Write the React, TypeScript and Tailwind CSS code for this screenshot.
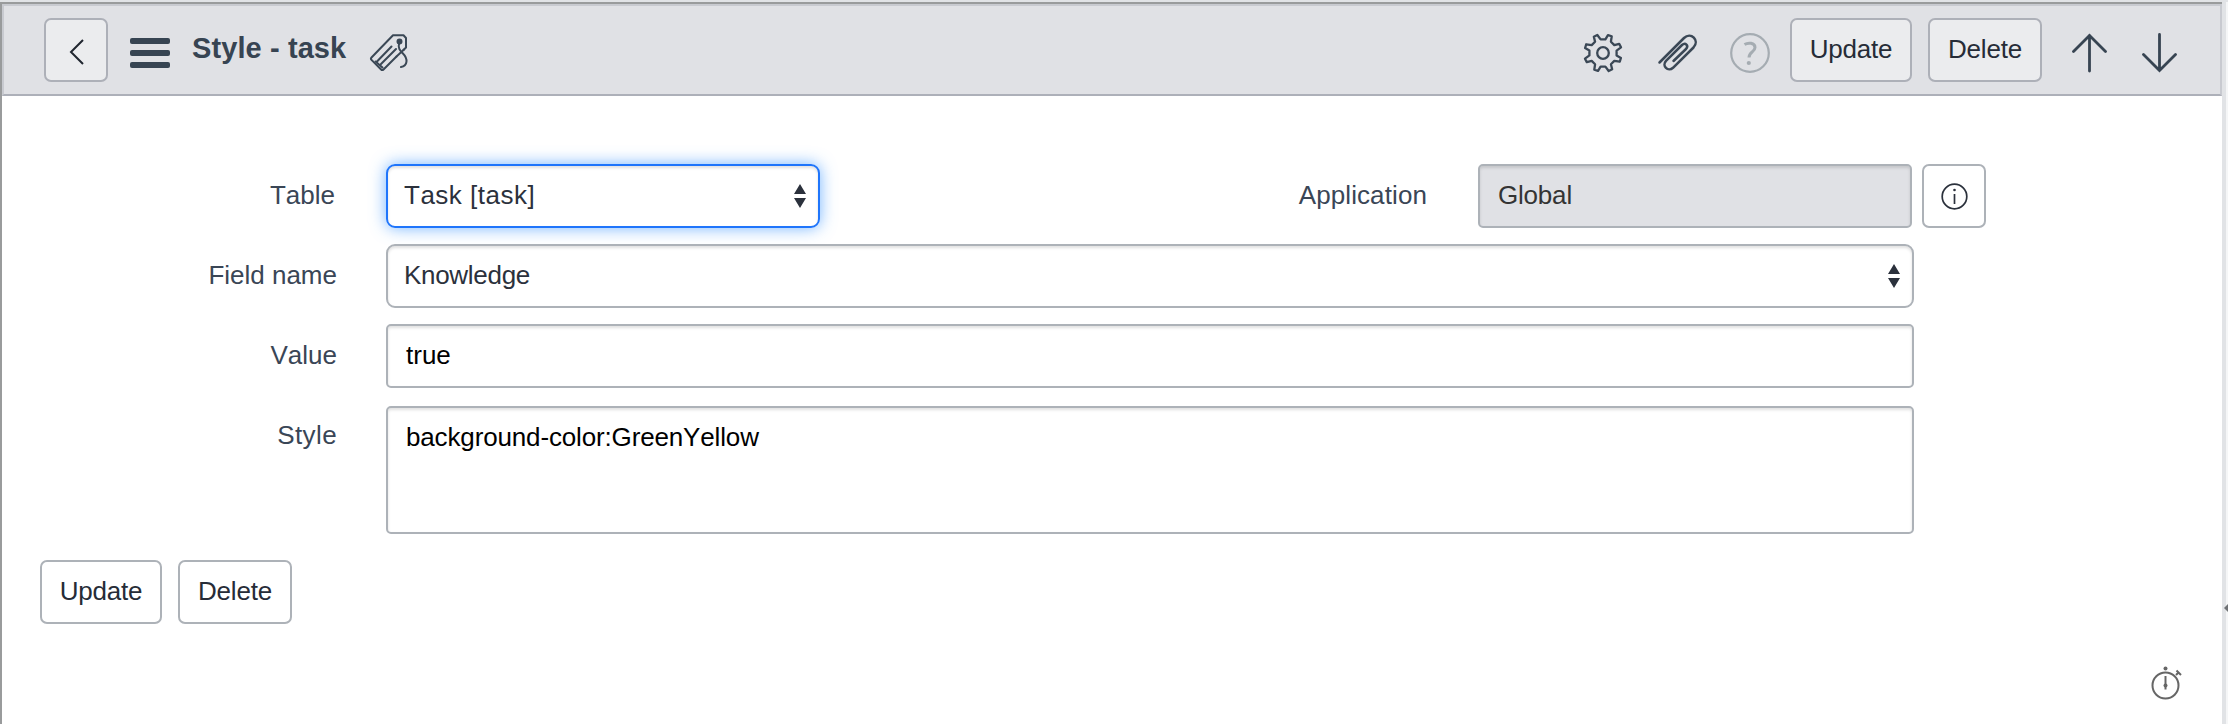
import React from "react";

const btn =
  "flex h-16 shrink-0 justify-center rounded-[7px] border-2 text-[26px] leading-[30px] pt-[14px]";

function polar(radius: number, degrees: number) {
  const a = (degrees * Math.PI) / 180;
  return `${(20 + radius * Math.sin(a)).toFixed(2)} ${(20 - radius * Math.cos(a)).toFixed(2)}`;
}

const gearPath =
  "M" +
  Array.from({ length: 8 }, (_, i) => {
    const a = i * 45;
    return [
      polar(13.8, a - 10),
      polar(13.8, a + 10),
      polar(18.6, a + 15.5),
      polar(18.9, a + 27.5),
    ].join("L");
  }).join("L") +
  "Z";

function Sort() {
  return (
    <svg className="ml-auto mt-[4px] h-6 w-3 shrink-0" viewBox="0 0 12 24" fill="#2b313c">
      <path d="M6 0 12 10H0zM6 24 0 14h12z" />
    </svg>
  );
}

function Label({ children, className }: { children: string; className: string }) {
  return (
    <div className={`shrink-0 text-right leading-[30px] pt-4 text-[#3a4656] ${className}`}>{children}</div>
  );
}

const field =
  "flex shrink-0 border-2 border-[#adb2b8] leading-[30px] pt-[14px] shadow-[inset_0_2px_3px_rgba(0,0,0,0.12)]";

export default function App() {
  return (
    <div className="flex h-[724px] w-[2228px] overflow-hidden bg-[#e1e3e6] pt-[2px] font-['Liberation_Sans',Arial,sans-serif] text-[26px] [font-kerning:none]">
      <div className="flex w-[2222px] shrink-0 flex-col border-l-2 border-t-2 border-[#999b9c] bg-white">
        <header className="flex h-[92px] shrink-0 border-2 border-[#c8cad0] border-b-[#adb0b9] bg-[#e0e1e5] pt-3">
          <button className={`${btn} ml-10 w-16 border-[#adb0b8] bg-[#ebecee]`}>
            <svg className="ml-[2px] mt-[4px] h-7 w-4" viewBox="0 0 16 28" fill="none" stroke="#20262f" strokeWidth="2">
              <path d="M14 2 2 14 14 26" />
            </svg>
          </button>
          <div className="ml-[22px] mt-5 flex h-[30px] w-10 flex-col justify-between">
            <span className="h-[6px] rounded-[2px] bg-[#374452]" />
            <span className="h-[6px] rounded-[2px] bg-[#374452]" />
            <span className="h-[6px] rounded-[2px] bg-[#374452]" />
          </div>
          <h1 className="ml-[22px] mt-[14px] w-[156px] whitespace-nowrap text-[29px] font-bold leading-[32px] tracking-[0.1px] text-[#374452]">
            Style - task
          </h1>
          <svg className="ml-5 mt-[14px] h-10 w-10 overflow-visible" viewBox="4 4 40 40" fill="none" stroke="#3b4856" strokeWidth="2" strokeLinejoin="round" strokeLinecap="round">
            <path d="M39.500 22 42 19.500V10l-2.500-2.700H29L7.500 29.500q-1.200 1.200 0 2.400l9.600 9.600q1.200 1.200 2.400 0L32.500 28.500" />
            <path d="m11.500 33.500 7 6M13 33.500 27.500 18.500M17 36 32 21" />
            <circle cx="35.500" cy="13.500" r="2" fill="#3b4856" />
            <path d="M35.500 14c-2 6 .5 8.500 3 11 6 6 5 13-1.500 14M40 21.500 32.500 28.500" />
          </svg>
          <div className="ml-auto mr-[42px] flex">
            <svg className="mt-[15px] h-10 w-10" viewBox="0 0 40 40" fill="none" stroke="#3b4856" strokeWidth="2.300" strokeLinejoin="round">
              <circle cx="20" cy="20" r="5.800" />
              <path d={gearPath} />
            </svg>
            <svg className="ml-[35px] mt-[15px] h-10 w-10 overflow-visible" viewBox="6 5 40 40" fill="none" stroke="#3b4856" strokeWidth="2.500" strokeLinecap="round" strokeLinejoin="round">
              <path d="M7.500 34.500 32 10c7-6.500 16 2.500 9.500 9.500L21 39.800c-5 4.500-11.500-2-7-7L30 17c3.500-3 7 .5 4 4L21.500 33" />
            </svg>
            <svg className="ml-[32px] mt-[15px] h-10 w-10" viewBox="0 0 40 40" fill="none" stroke="#a5acb2">
              <circle cx="20" cy="20" r="18.800" strokeWidth="2.200" />
              <path d="M14.500 11.500c3.500-2.200 10.500-2 10.500 3 0 4.500-6 4.500-6 10" strokeWidth="3" />
              <circle cx="18.800" cy="30" r="2.100" fill="#a5acb2" stroke="none" />
            </svg>
            <button className={`${btn} ml-[20px] w-[122px] border-[#adb0b8] bg-[#ebecee] tracking-[-0.2px] text-[#262c37]`}>Update</button>
            <button className={`${btn} ml-4 w-[114px] border-[#adb0b8] bg-[#ebecee] tracking-[-0.2px] text-[#262c37]`}>Delete</button>
            <svg className="ml-[30px] mt-[15px] h-10 w-9" viewBox="0 0 36 40" fill="none" stroke="#374452" strokeWidth="2.800" strokeLinecap="round">
              <path d="M17.500 38V2.500M1.500 18.500l16-16 16 16" />
            </svg>
            <svg className="ml-[34px] mt-[15px] h-10 w-9" viewBox="0 0 36 40" fill="none" stroke="#374452" strokeWidth="2.800" strokeLinecap="round">
              <path d="M17.500 1.500v36M1.500 21.500l16 16 16-16" />
            </svg>
          </div>
        </header>

        <main className="flex flex-1 flex-col pt-[68px]">
          <div className="flex">
            <Label className="mr-[51px] w-[333px]">Table</Label>
            <div className="flex h-16 w-[434px] shrink-0 rounded-[9px] border-2 border-[#1f75fb] pl-4 pr-[12px] pt-[14px] leading-[30px] tracking-[0.5px] text-[#2b313c] shadow-[inset_0_2px_3px_rgba(0,0,0,0.12),0_0_16px_rgba(60,150,255,0.7)]">
              Task [task]
              <Sort />
            </div>
            <Label className="mr-[51px] w-[607px] tracking-[0.1px]">Application</Label>
            <div className={`${field} h-16 w-[434px] rounded-[5px] bg-[#e0e1e5] pl-[18px] tracking-[-0.2px] text-[#343434]`}>Global</div>
            <button className={`${btn} ml-[10px] w-16 border-[#adb2b8]`}>
              <svg className="ml-px mt-[3px] h-[27px] w-[27px]" viewBox="0 0 27 27" fill="none" stroke="#2b313c" strokeWidth="1.700">
                <circle cx="13.500" cy="13.500" r="12.300" />
                <path d="M13.500 11v10" />
                <circle cx="13.500" cy="7" r="1.300" fill="#2b313c" stroke="none" />
              </svg>
            </button>
          </div>
          <div className="mt-4 flex">
            <Label className="mr-[49px] w-[335px]">Field name</Label>
            <div className={`${field} h-16 w-[1528px] rounded-[9px] pl-4 pr-[12px] tracking-[-0.3px] text-[#2b313c]`}>
              Knowledge
              <Sort />
            </div>
          </div>
          <div className="mt-4 flex">
            <Label className="mr-[49px] w-[335px]">Value</Label>
            <div className={`${field} h-16 w-[1528px] rounded-[5px] pl-[18px] text-black`}>true</div>
          </div>
          <div className="mt-4 flex">
            <Label className="mr-[49px] w-[335px] tracking-[0.4px]">Style</Label>
            <div className={`${field} mt-[2px] h-32 w-[1528px] rounded-[5px] pl-[18px] tracking-[-0.15px] text-black`}>
              background-color:GreenYellow
            </div>
          </div>
          <div className="ml-[38px] mt-[26px] flex gap-4">
            <button className={`${btn} w-[122px] border-[#adb2b8] tracking-[-0.2px] text-[#262c37]`}>Update</button>
            <button className={`${btn} w-[114px] border-[#adb2b8] tracking-[-0.2px] text-[#262c37]`}>Delete</button>
          </div>
          <svg className="ml-auto mr-[40px] mt-[40px] h-9 w-8 shrink-0" viewBox="0 0 32 36" fill="none" stroke="#666" strokeWidth="2">
            <circle cx="15.500" cy="21.500" r="13" />
            <path d="M15.500 12v13.500" />
            <circle cx="15.500" cy="21.500" r="2" fill="#666" stroke="none" />
            <circle cx="15.500" cy="4.500" r="2" fill="#666" stroke="none" />
            <path d="m26.500 6.500 4.500 4.500M26 11l3-3" />
          </svg>
        </main>
      </div>
      <div className="relative ml-1 w-[2px] bg-[#f5f6f7]">
        <svg className="absolute right-0 top-[602px] h-2 w-1" viewBox="0 0 4 8" fill="#6f7275">
          <path d="M4 0v8L0 4z" />
        </svg>
      </div>
    </div>
  );
}
